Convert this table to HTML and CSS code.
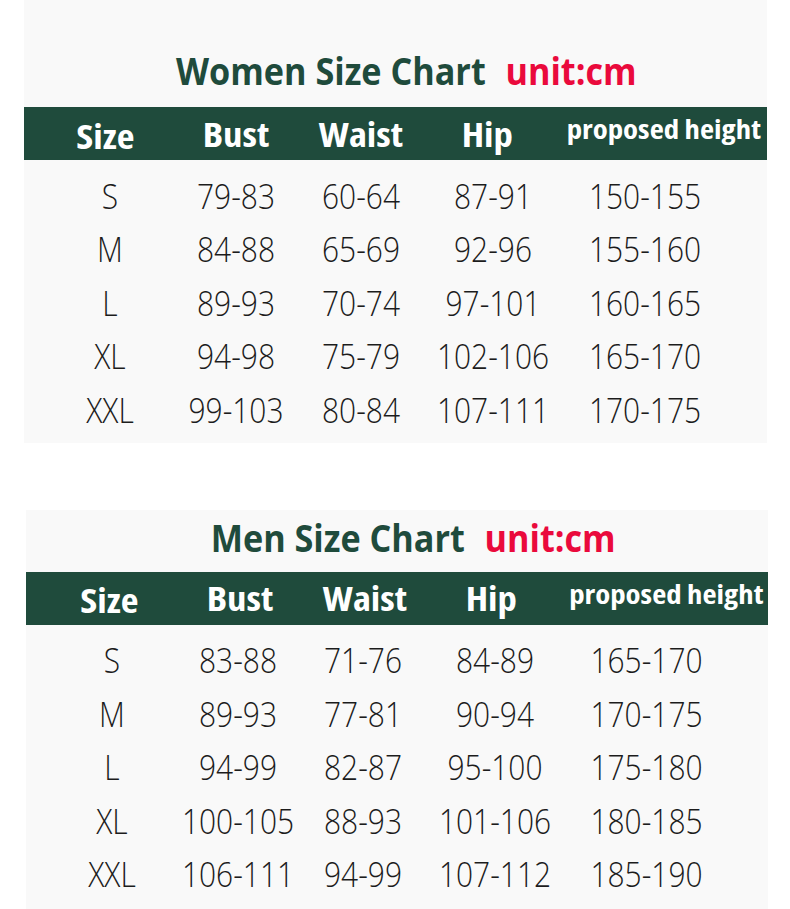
FILE: index.html
```html
<!DOCTYPE html>
<html>
<head>
<meta charset="utf-8">
<link rel="stylesheet" href="styles.css">
</head>
<body>
<section class="panel women">
  <h1 class="title">Women Size Chart <span class="unit">unit:cm</span></h1>
  <div class="head">
    <div class="c"><span class="h-size">Size</span></div>
    <div class="c"><span>Bust</span></div>
    <div class="c"><span>Waist</span></div>
    <div class="c"><span class="h-hip">Hip</span></div>
    <div class="c"><span class="h-ph">proposed height</span></div>
  </div>
  <div class="rows">
    <div class="row"><div class="c">S</div><div class="c">79-83</div><div class="c">60-64</div><div class="c">87-91</div><div class="c">150-155</div></div>
    <div class="row"><div class="c">M</div><div class="c">84-88</div><div class="c">65-69</div><div class="c">92-96</div><div class="c">155-160</div></div>
    <div class="row"><div class="c">L</div><div class="c">89-93</div><div class="c">70-74</div><div class="c">97-101</div><div class="c">160-165</div></div>
    <div class="row"><div class="c">XL</div><div class="c">94-98</div><div class="c">75-79</div><div class="c">102-106</div><div class="c">165-170</div></div>
    <div class="row"><div class="c">XXL</div><div class="c">99-103</div><div class="c">80-84</div><div class="c">107-111</div><div class="c">170-175</div></div>
  </div>
</section>
<section class="panel men">
  <h1 class="title">Men Size Chart <span class="unit">unit:cm</span></h1>
  <div class="head">
    <div class="c"><span class="h-size">Size</span></div>
    <div class="c"><span>Bust</span></div>
    <div class="c"><span>Waist</span></div>
    <div class="c"><span class="h-hip">Hip</span></div>
    <div class="c"><span class="h-ph">proposed height</span></div>
  </div>
  <div class="rows">
    <div class="row"><div class="c">S</div><div class="c">83-88</div><div class="c">71-76</div><div class="c">84-89</div><div class="c">165-170</div></div>
    <div class="row"><div class="c">M</div><div class="c">89-93</div><div class="c">77-81</div><div class="c">90-94</div><div class="c">170-175</div></div>
    <div class="row"><div class="c">L</div><div class="c">94-99</div><div class="c">82-87</div><div class="c">95-100</div><div class="c">175-180</div></div>
    <div class="row"><div class="c">XL</div><div class="c">100-105</div><div class="c">88-93</div><div class="c">101-106</div><div class="c">180-185</div></div>
    <div class="row"><div class="c">XXL</div><div class="c">106-111</div><div class="c">94-99</div><div class="c">107-112</div><div class="c">185-190</div></div>
  </div>
</section>
</body>
</html>
```
FILE: styles.css
```css
* { box-sizing: border-box; }
html, body { margin: 0; padding: 0; background: #ffffff; }
body { width: 790px; height: 909px; overflow: hidden; font-family: "Open Sans", "Noto Sans", sans-serif; }

.panel { background: #f9f9f9; }
.women { margin-left: 24px; width: 743px; padding-bottom: 6px; }
.men { margin-left: 26px; width: 742px; margin-top: 67px; height: 399px; }
.men .head { padding-left: 2px; }

.title {
  margin: 0;
  text-align: center;
  font-weight: 700;
  font-size: 38px;
  line-height: 40px;
  color: #1f4b3c;
  transform: scaleX(0.9);
}
.women .title { height: 107px; padding-top: 50px; padding-left: 24px; }
.men .title { height: 62px; padding-top: 7px; padding-left: 36px; }
.unit { color: #ea0a3c; margin-left: 12px; }

.head, .row {
  display: grid;
  grid-template-columns: 172px 80px 170px 94px 1fr;
}
.head {
  height: 53px;
  background: #1f4b3c;
  color: #ffffff;
  font-weight: 700;
  font-size: 34px;
  font-stretch: 75%;
}
.c { display: flex; justify-content: center; align-items: center; white-space: nowrap; }
.head .c { transform: scaleX(1.14); }
.head .h-size { padding-top: 4px; margin-left: -8px; }
.head .h-hip { margin-left: -10px; }
.head .h-ph { font-size: 27px; padding-bottom: 10px; margin-left: 18px; }

.rows { padding-top: 9px; }
.row {
  height: 53.5px;
  font-size: 34px;
  font-weight: 350;
  color: #1c1c1c;
}
.row .c { transform: scaleX(0.88); }
.row .c:nth-child(5) { margin-right: 17px; }
```
